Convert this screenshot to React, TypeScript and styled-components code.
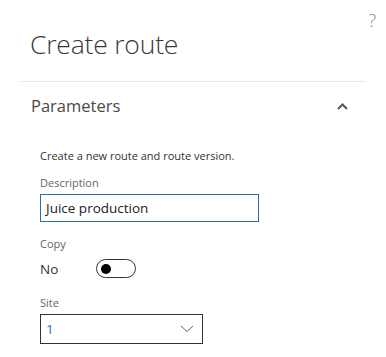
import { createGlobalStyle } from "styled-components";
import styled from "styled-components";

const GlobalStyle = createGlobalStyle`
  body {
    margin: 0;
    background: #ffffff;
    font-family: "Open Sans", "Liberation Sans", sans-serif;
    color: #333333;
  }
`;

const Panel = styled.div`
  width: 386px;
  height: 357px;
  padding: 0 10px 0 20px;
  box-sizing: border-box;
  overflow: hidden;
`;

const Header = styled.div`
  display: flex;
  justify-content: space-between;
  align-items: flex-start;
`;

const Title = styled.h1`
  margin: 27px 0 0 10px;
  font-size: 26.5px;
  font-weight: 300;
  line-height: 34px;
  color: #3a3a3a;
  letter-spacing: -0.2px;
`;

const HelpButton = styled.span`
  margin-top: 8px;
  font-size: 18px;
  font-weight: 300;
  color: #888888;
`;

const Divider = styled.div`
  height: 1px;
  background: #e6e6e6;
  margin: 20px 11px 0 0;
`;

const SectionHeader = styled.div`
  display: flex;
  justify-content: space-between;
  align-items: center;
  padding: 12px 28px 0 11px;
`;

const SectionTitle = styled.h2`
  margin: 0;
  font-size: 16.5px;
  font-weight: 400;
  line-height: 24px;
  color: #4a4a4a;
`;

const SectionBody = styled.div`
  padding: 30px 0 0 20px;
  display: flex;
  flex-direction: column;
`;

const Intro = styled.p`
  margin: 0 0 11px 0;
  font-size: 11px;
  line-height: 16px;
  color: #333333;
`;

const Label = styled.label`
  font-size: 11px;
  line-height: 15px;
  color: #666666;
  margin-bottom: 4px;
`;

const Field = styled.div<{ $gap?: number }>`
  display: flex;
  flex-direction: column;
  margin-bottom: ${(p) => p.$gap ?? 12}px;
`;

const TextInput = styled.div`
  width: 219px;
  height: 28px;
  box-sizing: border-box;
  border: 1px solid #2b6cb0;
  padding: 0 5px;
  display: flex;
  align-items: center;
  font-size: 13.5px;
  color: #222222;
`;

const ToggleRow = styled.div`
  display: flex;
  align-items: center;
  gap: 38px;
  margin-top: 4px;
  font-size: 13.5px;
  color: #333333;
`;

const Toggle = styled.div`
  width: 40px;
  height: 19px;
  box-sizing: border-box;
  border: 1px solid #333333;
  border-radius: 10px;
  display: flex;
  align-items: center;
  padding-left: 4px;
`;

const Knob = styled.div`
  width: 10px;
  height: 10px;
  border-radius: 50%;
  background: #000000;
`;

const Select = styled.div`
  width: 163px;
  height: 30px;
  box-sizing: border-box;
  border: 1px solid #333333;
  display: flex;
  align-items: center;
  justify-content: space-between;
  padding: 0 8px 0 5px;
  font-size: 13.5px;
  color: #1f6fbf;
`;

const Chevron = ({ up }: { up?: boolean }) =>
  up ? (
    <svg width="11" height="7" viewBox="0 0 11 7">
      <polyline points="1,6 5.5,1.5 10,6" fill="none" stroke="#555555" strokeWidth={2} />
    </svg>
  ) : (
    <svg width="14" height="8" viewBox="0 0 14 8">
      <polyline points="1,1 7,6.5 13,1" fill="none" stroke="#666666" strokeWidth={1} />
    </svg>
  );

const App = () => {
  return (
    <Panel>
      <GlobalStyle />
      <Header>
        <Title>Create route</Title>
        <HelpButton>?</HelpButton>
      </Header>
      <Divider />
      <SectionHeader>
        <SectionTitle>Parameters</SectionTitle>
        <Chevron up />
      </SectionHeader>
      <SectionBody>
        <Intro>Create a new route and route version.</Intro>
        <Field $gap={14}>
          <Label>Description</Label>
          <TextInput>Juice production</TextInput>
        </Field>
        <Field $gap={17}>
          <Label>Copy</Label>
          <ToggleRow>
            <span>No</span>
            <Toggle>
              <Knob />
            </Toggle>
          </ToggleRow>
        </Field>
        <Field $gap={12}>
          <Label>Site</Label>
          <Select>
            <span>1</span>
            <Chevron />
          </Select>
        </Field>
      </SectionBody>
    </Panel>
  );
};

export default App;
